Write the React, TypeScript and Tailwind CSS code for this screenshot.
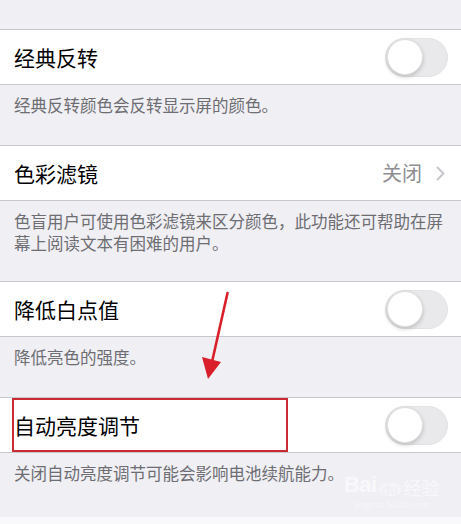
const font = { fontFamily: '"Noto Sans CJK SC", "Noto Sans", sans-serif' };

function Toggle() {
  return (
    <div className="flex h-[39px] w-[63px] items-center rounded-full border border-[#e3e3e6] bg-[#e9e9eb] p-[1px]">
      <div className="h-[36px] w-[36px] rounded-full border border-[#e0e0e0] bg-white shadow-[0_2px_4px_rgba(0,0,0,0.18)]" />
    </div>
  );
}

function Row({
  title,
  children,
  overlay,
}: {
  title: string;
  children?: React.ReactNode;
  overlay?: React.ReactNode;
}) {
  return (
    <div className="relative flex h-[56px] items-center justify-between border-y border-[#c8c7cc] bg-white pl-[14px] pr-[13px]">
      <span className="text-[21px] leading-none text-black">{title}</span>
      {children}
      {overlay}
    </div>
  );
}

function Footer({ children, pb = "pb-[29px]" }: { children: React.ReactNode; pb?: string }) {
  return (
    <div className={`px-[14px] pt-[9px] text-[16.5px] leading-[22px] text-[#6d6d72] ${pb}`}>
      {children}
    </div>
  );
}

export default function App() {
  return (
    <div className="relative h-[524px] w-[461px] overflow-hidden bg-[#efeff4]" style={font}>
      <div className="h-[29px]" />
      <Row title="经典反转">
        <Toggle />
      </Row>
      <Footer>经典反转颜色会反转显示屏的颜色。</Footer>

      <Row title="色彩滤镜">
        <div className="flex items-center gap-[14px]">
          <span className="text-[20px] leading-none text-[#8e8e93]">关闭</span>
          <svg width="9" height="15" viewBox="0 0 9 15" className="mr-[3px]">
            <path d="M1.5 1.5 L7.5 7.5 L1.5 13.5" fill="none" stroke="#c7c7cc" strokeWidth="2" strokeLinecap="round" strokeLinejoin="round" />
          </svg>
        </div>
      </Row>
      <Footer pb="pb-[27px]">
        色盲用户可使用色彩滤镜来区分颜色，此功能还可帮助在屏
        <br />
        幕上阅读文本有困难的用户。
      </Footer>

      <Row title="降低白点值">
        <Toggle />
      </Row>
      <Footer pb="pb-[29px]">降低亮色的强度。</Footer>

      <Row
        title="自动亮度调节"
        overlay={
          <div className="pointer-events-none absolute left-[12px] top-[0px] h-[54px] w-[276px] border-2 border-[#cc2a33]" />
        }
      >
        <Toggle />
      </Row>
      <Footer pb="pb-[33px]">关闭自动亮度调节可能会影响电池续航能力。</Footer>
      <div className="h-[10px] bg-[#f9f9fb]" />

      {/* red annotation arrow */}
      <svg className="pointer-events-none absolute left-0 top-0" width="461" height="524" viewBox="0 0 461 524">
        <line x1="227.5" y1="293" x2="212" y2="362" stroke="#d9202a" strokeWidth="2.6" strokeLinecap="round" />
        <polygon points="202,357 221,362 208,379" fill="#d9202a" />
      </svg>

      {/* watermark */}
      <div className="pointer-events-none absolute left-[344px] top-[474px] flex flex-col items-center text-white opacity-60">
        <div className="flex items-end gap-[2px] leading-none">
          <span className="text-[22px] font-bold tracking-tight" style={{ fontFamily: '"Liberation Sans", sans-serif' }}>
            Bai
          </span>
          <span className="rounded-full bg-white/70 px-[3px] text-[13px] font-bold text-[#efeff4]">du</span>
          <span className="text-[18px]">经验</span>
        </div>
        <span className="mt-[4px] text-[10px] leading-none text-white/80" style={{ fontFamily: '"Liberation Serif", serif' }}>
          jingyan.baidu.com
        </span>
      </div>
    </div>
  );
}
